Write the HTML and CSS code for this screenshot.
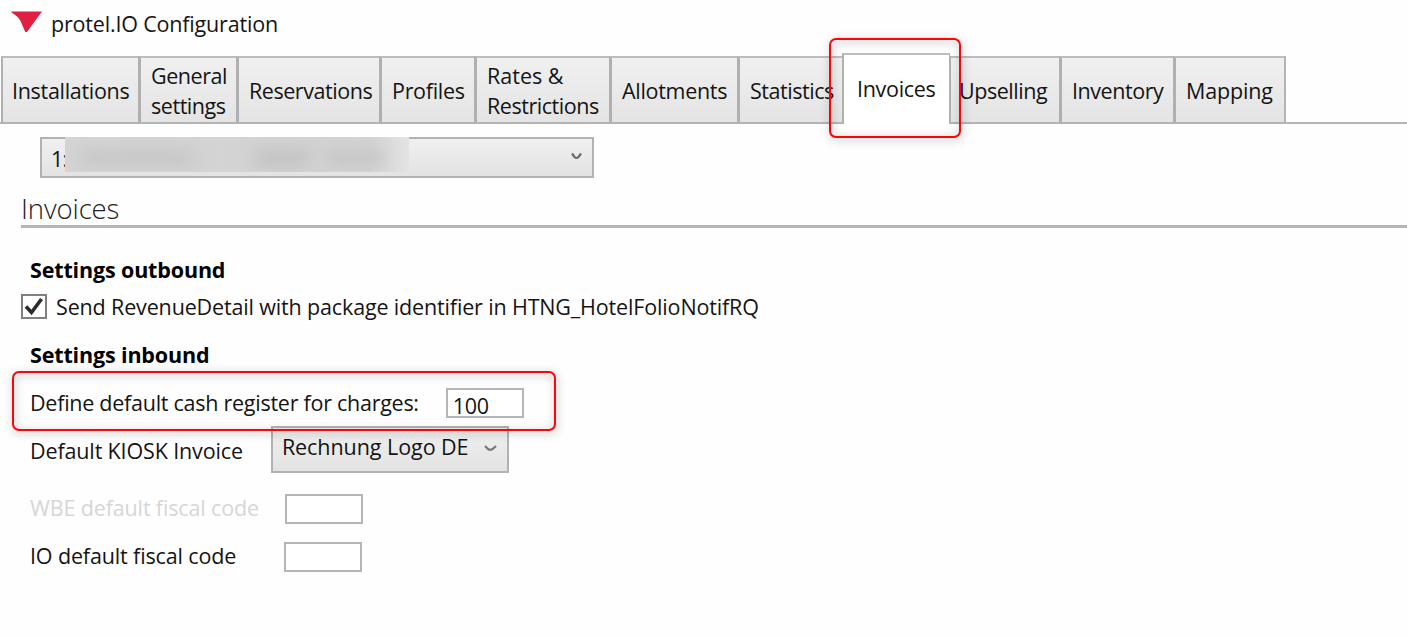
FILE: index.html
```
<!DOCTYPE html>
<html lang="en">
<head>
<meta charset="utf-8">
<title>protel.IO Configuration</title>
<link rel="stylesheet" href="styles.css">
</head>
<body>
<div class="window">
  <header class="titlebar">
    <svg class="logo" width="32" height="22" viewBox="0 0 32 22"><path d="M0.5 0.5H31L16 21H14.3L9.5 10Q7 5.500 0.500 1.600Z" fill="#e11f43"/></svg>
    <h1 class="title">protel.IO Configuration</h1>
  </header>
  <nav class="tabs">
    <div class="tab first tight">Installations</div>
    <div class="tab"><span class="tighter">General</span><br><span class="tighter">settings</span></div>
    <div class="tab tighter">Reservations</div>
    <div class="tab tight">Profiles</div>
    <div class="tab">Rates &amp;<br><span class="tighter">Restrictions</span></div>
    <div class="tab tight">Allotments</div>
    <div class="tab tighter">Statistics</div>
    <div class="tab active tight">Invoices</div>
    <div class="tab after tighter">Upselling</div>
    <div class="tab tighter">Inventory</div>
    <div class="tab last snug">Mapping</div>
    <div class="callout callout-tab"></div>
  </nav>
  <main class="content">
    <div class="combo hotel">
      <span class="number">1:</span>
      <div class="redacted"><i class="smudge one"></i><i class="smudge two"></i><i class="smudge three"></i></div>
      <svg class="chevron" width="13" height="9" viewBox="0 0 13 9"><path d="M2 1.500L4.500 5Q6.500 7 8.500 5L11 1.500" fill="none" stroke="#6c6c6c" stroke-width="2.200"/></svg>
    </div>
    <h2 class="section">Invoices</h2>
    <h3 class="group outbound">Settings outbound</h3>
    <label class="check-row">
      <svg class="check" width="26" height="25" viewBox="0 0 26 25"><rect x="1" y="1" width="24" height="23" fill="#fff" stroke="#808080" stroke-width="2"/><path d="M5 12.500L10.500 18.500L20.500 5" fill="none" stroke="#2c2c2c" stroke-width="3.600"/></svg>
      <span class="long">Send RevenueDetail with package identifier in HTNG_HotelFolioNotifRQ</span>
    </label>
    <h3 class="group inbound">Settings inbound</h3>
    <div class="row register">
      <span class="define">Define default cash register for charges:</span>
      <div class="field">100</div>
      <div class="callout callout-row"></div>
    </div>
    <div class="row kiosk">
      <span class="snug">Default KIOSK Invoice</span>
      <div class="combo report"><span>Rechnung Logo DE</span>
        <svg class="chevron" width="13" height="9" viewBox="0 0 13 9"><path d="M1 2L4 5Q6 6.500 8.500 5L12 2" fill="none" stroke="#777" stroke-width="2.200"/></svg>
      </div>
    </div>
    <div class="row wbe"><span class="snug">WBE default fiscal code</span><div class="field"></div></div>
    <div class="row io"><span class="snug">IO default fiscal code</span><div class="field"></div></div>
  </main>
</div>
</body>
</html>
```
FILE: styles.css
```
* { box-sizing: border-box; }
body {
  margin: 0;
  background: #fefefe;
  color: #141414;
  font: 21.5px/30px "Open Sans", "Noto Sans", sans-serif;
  overflow: hidden;
}
h1, h2, h3 { margin: 0; font-size: inherit; font-weight: 400; }
.window { height: 638px; white-space: nowrap; }
.snug { letter-spacing: -0.14px; }
.tight { letter-spacing: -0.3px; }
.tighter { letter-spacing: -0.45px; }
.long { letter-spacing: -0.15px; }
.define { letter-spacing: -0.26px; }

.titlebar { display: flex; height: 53px; padding: 9px 0 0 11px; }
.logo { margin-top: 2px; }
.title { margin-left: 8px; letter-spacing: -0.18px; }

.tabs {
  position: relative;
  display: grid;
  grid-template-columns: 137px 98px 143px 95px 135px 128px 105px 108px 109px 114px 113px;
  align-items: end;
  height: 71px;
  padding-left: 1px;
  background: linear-gradient(#b4b4b4, #b4b4b4) 0 69px / 100% 2px no-repeat;
}
.tab {
  display: flex;
  flex-direction: column;
  justify-content: center;
  height: 68px;
  padding: 2px 0 0 10px;
  border-top: 2px solid #bdbdbd;
  border-bottom: 2px solid #b4b4b4;
  border-left: 3px solid #b0b0b0;
  background: linear-gradient(#f0f0f0, #e4e4e4);
}
.tab br { display: none; }
.tab.first { border-left-width: 2px; padding-left: 9px; }
.tab.active {
  height: 71px;
  padding: 0 0 1px 13px;
  border-left-width: 2px;
  border-right: 1px solid #b0b0b0;
  border-bottom: 0;
  background: #fff;
}
.tab.after { border-left-width: 1px; padding-left: 8px; }
.tab.last { border-right: 2px solid #b4b4b4; }

.callout {
  position: absolute;
  border: 2px solid #fc0508;
  border-radius: 7px;
  filter: drop-shadow(1px 2px 4px rgba(0, 0, 0, .4));
  pointer-events: none;
}
.callout-tab { left: 829px; top: -15px; width: 132px; height: 100px; }
.callout-row { left: 12px; top: -17px; width: 544px; height: 60px; }

.content { padding-top: 13px; }
.combo {
  display: flex;
  border: 2px solid #b2b2b2;
  background: linear-gradient(#f0f0f0, #e3e3e3);
}
.hotel { position: relative; width: 554px; height: 41px; margin-left: 40px; padding: 5px 0 0 9px; }
.number { width: 18px; letter-spacing: -0.8px; }
.redacted {
  position: absolute;
  left: 23px;
  top: -2px;
  width: 344px;
  height: 35px;
  overflow: hidden;
  background: linear-gradient(90deg, #d4d4d4 0, #d3d3d3 88%, #e3e3e3 100%);
}
.smudge { position: absolute; height: 12px; top: 15px; background: #c2c2c2; filter: blur(8px); }
.one { left: 16px; width: 112px; }
.two { left: 190px; width: 54px; top: 12px; height: 18px; }
.three { left: 262px; width: 58px; }
.hotel .chevron { margin: 8px 0 0 501px; }
.section {
  height: 50px;
  margin-left: 21px;
  padding-top: 16px;
  border-bottom: 3px solid #b5b5b5;
  font-size: 27.5px;
  font-weight: 300;
  letter-spacing: -0.1px;
  color: #222;
}
.group { padding-left: 30px; font-weight: 700; color: #000; letter-spacing: -0.15px; }
.outbound { margin-top: 27px; }
.check-row { display: flex; height: 30px; margin-top: 7px; padding-left: 21px; }
.check { margin: 2px 9px 0 0; }
.inbound { margin-top: 18px; }

.row { position: relative; display: flex; height: 30px; padding-left: 30px; }
.field { width: 78px; height: 30px; border: 2px solid #b4b5ba; background: #fff; }
.register { z-index: 2; margin-top: 18px; }
.register .field { margin-left: 27px; padding-left: 5px; line-height: 32px; letter-spacing: -0.3px; }
.kiosk { margin-top: 18px; }
.report { width: 238px; height: 47px; margin: -10px 0 0 28px; padding: 4px 0 0 9px; letter-spacing: -0.06px; }
.report .chevron { margin: 12px 0 0 16px; }
.wbe { margin-top: 27px; color: #d6d6d6; }
.wbe .field { margin: 1px 0 0 26px; }
.io { margin-top: 18px; }
.io .field { margin: 1px 0 0 48px; }
```
